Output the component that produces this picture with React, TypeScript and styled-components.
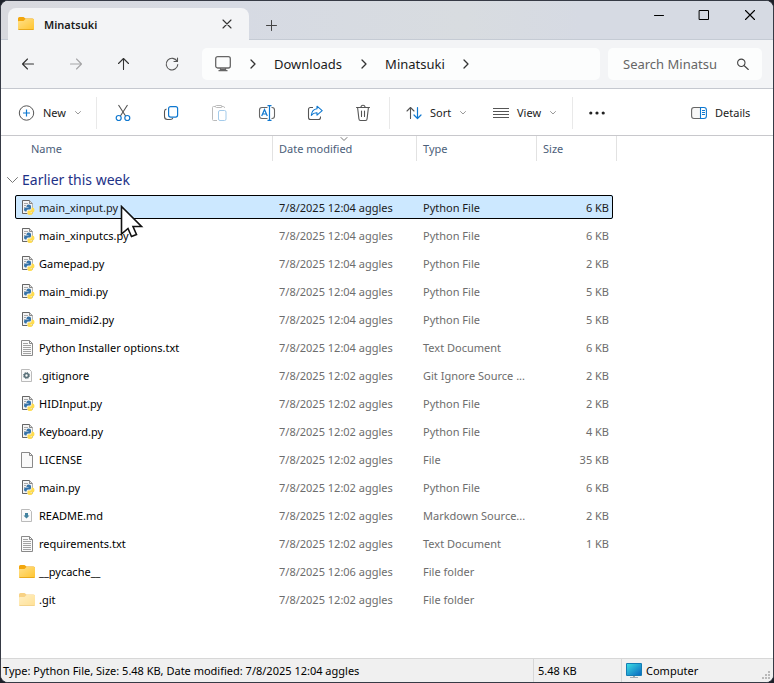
import React from "react";
import styled, { createGlobalStyle, css } from "styled-components";

const Global = createGlobalStyle`
  * { box-sizing: border-box; }
  html, body { margin: 0; background: #1d2029; }
  body, button, input { font-family: "Noto Sans", "Open Sans", sans-serif; font-size: 11px; }
  button { border: 0; padding: 0; background: none; color: inherit; cursor: default; }
  svg { display: block; flex: none; }
`;

const Window = styled.div`
  position: relative;
  display: flex;
  flex-direction: column;
  min-height: 100vh;
  border: 1px solid #363a45;
  border-radius: 8px;
  background: #fff;
  color: #000;
  overflow: hidden;
`;

const TitleBar = styled.header`
  display: flex;
  height: 39px;
  padding-left: 7px;
  background: linear-gradient(90deg, #d8d9de, #d6dae3 30%, #d8dce0 60%, #d6dae3 75%);
  box-shadow: inset 0 -1px #c5cbd4;
`;

const Tab = styled.div`
  display: flex;
  align-items: center;
  width: 241px;
  margin-top: 7px;
  padding: 0 16px 0 10px;
  border-radius: 8px 8px 0 0;
  background: #f3f4f6;
`;

const TabTitle = styled.span`
  flex: 1;
  margin-left: 10px;
  font-size: 11px;
  font-weight: 600;
  color: #1b1b1b;
`;

const PlainButton = styled.button`
  display: flex;
  align-items: center;
  justify-content: center;
`;

const NewTab = styled(PlainButton)`
  width: 44px;
  padding-top: 8px;
`;

const Captions = styled.div`
  display: flex;
  height: 28px;
  margin-left: auto;
`;

const Caption = styled(PlainButton)`
  width: 46px;
`;

const NavBar = styled.nav`
  display: flex;
  align-items: center;
  height: 49px;
  padding: 0 11px 0 3px;
  border-bottom: 1px solid #c5c8cf;
  background: #f3f4f6;
`;

const NavButton = styled(PlainButton)`
  width: 48px;
  height: 32px;
`;

const AddressBar = styled.div`
  display: flex;
  align-items: center;
  flex: 1;
  height: 32px;
  margin: 0 8px 0 6px;
  padding-left: 13px;
  border-radius: 5px;
  background: #fcfdfd;
`;

const Crumb = styled.a`
  color: #1b1b1b;
  font-size: 13px;
  text-decoration: none;
`;

const CrumbArrow = styled.span`
  display: flex;
  justify-content: center;
  width: 43px;
`;

const SearchBox = styled.label`
  display: flex;
  align-items: center;
  width: 154px;
  height: 32px;
  padding: 0 13px 0 15px;
  border-radius: 5px;
  background: #fcfdfd;
`;

const SearchInput = styled.input`
  flex: 1;
  min-width: 0;
  padding: 0;
  border: 0;
  outline: 0;
  background: none;
  font-size: 13px;
  &::placeholder { color: #666; opacity: 1; }
`;

const Toolbar = styled.div`
  display: flex;
  align-items: center;
  height: 47px;
  padding: 1px 22px 0 17px;
  border-bottom: 1px solid #c8c8cc;
  color: #1b1b1b;
`;

const Tool = styled(PlainButton)`
  width: 48px;
  height: 32px;
`;

const ToolGroup = styled.div`
  display: flex;
  padding: 0 2px;
`;

const LabelTool = styled(PlainButton)<{ $width: number }>`
  justify-content: flex-start;
  gap: 8px;
  width: ${(p) => p.$width}px;
  height: 32px;
  white-space: nowrap;
`;

const SortTool = styled(LabelTool)`
  margin-left: 16px;
`;

const ToolLabel = styled.span`
  font-size: 11px;
`;

const Divider = styled.span`
  width: 1px;
  height: 32px;
  background: #e9e9e9;
`;

const Spacer = styled.span`
  flex: 1;
`;

const Content = styled.main`
  flex: 1;
  padding-bottom: 40px;
`;

const Files = styled.table`
  width: 598px;
  margin: -4px 0 0 14px;
  table-layout: fixed;
  border-collapse: separate;
  border-spacing: 0 4px;
`;

const Heading = styled.th<{ $width: number; $inset: number }>`
  position: relative;
  width: ${(p) => p.$width}px;
  height: 25px;
  padding: 0 0 0 ${(p) => p.$inset}px;
  text-align: left;
  font-weight: 400;
  color: #4c607a;
  & + & { border-left: 1px solid #e2e2e2; }
  &:last-child::after {
    content: "";
    position: absolute;
    top: 0;
    right: -4px;
    width: 1px;
    height: 25px;
    background: #e2e2e2;
  }
`;

const SortMark = styled.span`
  position: absolute;
  top: 1px;
  left: 67px;
`;

const GroupCell = styled.th`
  height: 26px;
  padding: 4px 0 0;
  font-weight: 400;
`;

const GroupButton = styled.button`
  display: flex;
  align-items: center;
  gap: 4px;
  margin-left: -9px;
  color: #1e3287;
  font-size: 14px;
  line-height: 22px;
`;

const Cell = styled.td`
  height: 24px;
  padding: 2px 0 0 7px;
  line-height: 16px;
  color: #6d6d6d;
  white-space: nowrap;
`;

const SizeCell = styled(Cell)`
  padding-right: 4px;
  text-align: right;
`;

const NameCell = styled(Cell)`
  padding-left: 4px;
  color: #000;
`;

const FileName = styled.span`
  display: flex;
  align-items: center;
  gap: 4px;
`;

const Row = styled.tr<{ $selected: boolean }>`
  ${(p) =>
    p.$selected &&
    css`
      background: #cce8ff;
      outline: 1px solid #000;
      outline-offset: -1px;
      border-radius: 2px;
      ${Cell} { color: #1b1b1b; }
    `}
`;

const StatusBar = styled.footer`
  display: flex;
  height: 24px;
  border-top: 1px solid #d7d7d7;
  background: #f0f0f0;
  line-height: 24px;
`;

const StatusPart = styled.div<{ $width?: number }>`
  display: flex;
  align-items: center;
  gap: 4px;
  ${(p) => (p.$width ? `width: ${p.$width}px;` : "flex: 1;")}
  padding-left: 2px;
  white-space: nowrap;
  & + & { padding-left: 4px; border-left: 1px solid #d7d7d7; }
`;

const Grip = styled.span`
  align-self: flex-end;
  margin-left: auto;
`;

const Pointer = styled.svg`
  position: absolute;
  top: 204px;
  left: 119px;
`;

function Stroke({ d, size = 16, color = "#333", width = 1 }: { d: string; size?: number; color?: string; width?: number }) {
  return (
    <svg width={size} height={size} viewBox={`0 0 ${size} ${size}`} fill="none" stroke={color} strokeWidth={width} strokeLinecap="round" strokeLinejoin="round" aria-hidden="true">
      <path d={d} />
    </svg>
  );
}

const Chevron = () => <Stroke size={8} color="#999" d="M1.5 2.5 4 5 6.5 2.5" />;

function Folder({ pale = false }: { pale?: boolean }) {
  return (
    <svg width="16" height="16" viewBox="0 0 16 16" opacity={pale ? 0.5 : 1} aria-hidden="true">
      <defs>
        <linearGradient id="folder" x2="1" y2="1">
          <stop stopColor="#ffe08a" />
          <stop offset="1" stopColor="#ffc42e" />
        </linearGradient>
      </defs>
      <path d="M0 2.5Q0 1 1.5 1H5.5L7.5 2.5H14.5Q16 2.5 16 4V6H0Z" fill="#f2a60d" />
      <path d="M0 5.5Q0 5 .7 5H5.5L7.5 3H15.2Q16 3 16 4V13Q16 14 15 14H1Q0 14 0 13Z" fill="url(#folder)" />
      <path d="M.5 13.5H15.5" stroke="#e9a91c" />
    </svg>
  );
}

function PageIcon({ kind }: { kind: string }) {
  if (kind === "folder" || kind === "hidden") return <Folder pale={kind === "hidden"} />;
  if (kind === "python")
    return (
      <svg width="16" height="16" viewBox="0 0 16 16" aria-hidden="true">
        <path d="M3.5 .5H10.5L13.5 3.5V13.5H3.5Z" fill="#f4f4f4" stroke="#b5b5b5" />
        <path d="M8 13.5H3.5V.5H10.5L13 3" fill="none" stroke="#666" />
        <path d="M10.5 .5V3.5H13.5" fill="#ddd" stroke="#888" />
        <path d="M5 3.5H9M5 5.5H7M5 7.5H6" stroke="#aaa" />
        <path d="M7.5 6Q7.5 4.5 9.5 4.5Q12 4.5 12 6V8Q12 9.5 10.5 9.5H9Q7.5 9.5 7.5 11.5H6.5Q5 11.5 5 9.5Q5 7.5 6.5 7.5H9.5V7H7.5Z" fill="#3673a8" />
        <path d="M12.5 7.5H13.5Q15.5 7.5 15.5 10Q15.5 12.5 13.5 12.5H11.5V13H13.5V13.5Q13.5 15 11 15Q8.5 15 8.5 13.5V11.5Q8.5 10.5 9.5 10.5H11Q12.5 10.5 12.5 9Z" fill="#ffdc4f" />
      </svg>
    );
  const small = kind === "git" || kind === "markdown";
  return (
    <svg width="16" height="16" viewBox="0 0 16 16" aria-hidden="true">
      {small ? (
        <path d="M2.5 1.5H10.5L12.5 3.5V13.5H2.5Z" fill="#fafafa" stroke="#bbb" />
      ) : (
        <path d="M2.5 .5H10.5L13.5 3.5V15.5H2.5Z" fill="#fafafa" stroke="#8a8a8a" />
      )}
      {!small && <path d="M10.5 .5V3.5H13.5" fill="none" stroke="#8a8a8a" />}
      {kind === "text" && <path d="M4 3.5H9M4 5.5H12M4 7.5H12M4 9.5H12M4 11.5H12M4 13.5H12" stroke="#a2a2a2" />}
      {kind === "git" && (
        <g fill="none" stroke="#597078">
          <circle cx="7.5" cy="7.5" r="2" strokeWidth="1.6" />
          <circle cx="7.5" cy="7.5" r="3.1" strokeWidth="1" strokeDasharray="1.2 1.23" />
        </g>
      )}
      {kind === "markdown" && <path d="M6 5H9V7.5H10.5L7.5 10.5 4.5 7.5H6Z" fill="#43829f" />}
    </svg>
  );
}

const MonitorIcon = () => (
  <svg width="16" height="16" viewBox="0 0 16 16" fill="none" stroke="#666" strokeWidth="1.3" aria-hidden="true">
    <rect x=".7" y=".7" width="14.6" height="11.3" rx="2" />
    <path d="M5.5 12V14.5M10.5 12V14.5M3.5 14.7H12.5M6 13.3H10" />
  </svg>
);

const BLUE = "#0f78d0";

const NewIcon = () => (
  <svg width="17" height="16" viewBox="0 0 17 16" fill="none" aria-hidden="true">
    <circle cx="8.5" cy="8" r="7.2" stroke="#555" />
    <path d="M5 8H12M8.5 4.5V11.5" stroke={BLUE} strokeWidth="1.2" />
  </svg>
);
const CutIcon = () => (
  <svg width="16" height="18" viewBox="0 0 16 18" fill="none" aria-hidden="true">
    <path d="M3.5 1 10.6 12M12.5 1 5.4 12" stroke="#555" strokeWidth="1.1" />
    <circle cx="3.7" cy="14" r="2.5" stroke={BLUE} strokeWidth="1.2" />
    <circle cx="12.3" cy="14" r="2.5" stroke={BLUE} strokeWidth="1.2" />
  </svg>
);
const CopyIcon = () => (
  <svg width="16" height="16" viewBox="0 0 16 16" fill="none" aria-hidden="true">
    <path d="M3.5 4Q1.5 4.5 1.5 6.5V11.5Q1.5 14.5 4.5 14.5H7Q9.5 14.5 9.8 12.8" stroke="#555" strokeWidth="1.1" />
    <rect x="5.6" y="1.6" width="9" height="10.5" rx="2" stroke={BLUE} strokeWidth="1.2" />
  </svg>
);
const PasteIcon = () => (
  <svg width="16" height="18" viewBox="0 0 16 18" fill="none" aria-hidden="true">
    <path d="M4.5 2.5H2.5Q1.5 2.5 1.5 3.5V15.5Q1.5 16.5 2.5 16.5H6M10.5 2.5H12.5Q13.5 2.5 13.5 4" stroke="#bbb" />
    <rect x="4.5" y="1.5" width="6.5" height="2" rx="1" stroke="#bbb" />
    <rect x="7.5" y="6.5" width="7.5" height="10" rx="1.5" stroke="#a4cbea" />
  </svg>
);
const RenameIcon = () => (
  <svg width="18" height="16" viewBox="0 0 18 16" fill="none" aria-hidden="true">
    <path d="M9.5 2.5H4Q1.5 2.5 1.5 5V11Q1.5 13.5 4 13.5H9.5M13.5 2.5H14Q16.5 2.5 16.5 5V11Q16.5 13.5 14 13.5H13.5" stroke="#666" strokeWidth="1.1" />
    <path d="M3.7 11 6.5 4.6 9.3 11M4.7 9H8.3M9.5 .6H13.5M11.5 .6V15.4M9.5 15.4H13.5" stroke={BLUE} strokeWidth="1.2" />
  </svg>
);
const ShareIcon = () => (
  <svg width="16" height="16" viewBox="0 0 16 16" fill="none" strokeLinejoin="round" aria-hidden="true">
    <path d="M6 2.5H3.5Q1.5 2.5 1.5 4.5V12.5Q1.5 14.5 3.5 14.5H11.5Q13.5 14.5 13.5 12.5V11.5" stroke="#555" strokeWidth="1.1" />
    <path d="M10 1.2 15.2 5.7 10 10.2V7.7Q6.5 7.5 4.3 10.4Q5 4.3 10 3.8Z" stroke={BLUE} strokeWidth="1.1" />
  </svg>
);
const DeleteIcon = () => (
  <svg width="16" height="18" viewBox="0 0 16 18" fill="none" stroke="#555" strokeWidth="1.1" strokeLinecap="round" aria-hidden="true">
    <path d="M1.5 3.5H14.5M6 3.3Q6 1.3 8 1.3T10 3.3M2.6 3.7 3.9 14.8Q4 16.5 5.5 16.5H10.5Q12 16.5 12.1 14.8L13.4 3.7M6.5 7V12.5M9.5 7V12.5" />
  </svg>
);
const SortIcon = () => (
  <svg width="16" height="14" viewBox="0 0 16 14" fill="none" strokeLinecap="round" strokeLinejoin="round" aria-hidden="true">
    <path d="M4.5 12.5V1.5M1 5 4.5 1.5 8 5" stroke="#555" strokeWidth="1.1" />
    <path d="M11.5 1.5V12.5M8 9 11.5 12.5 15 9" stroke={BLUE} strokeWidth="1.2" />
  </svg>
);
const DetailsIcon = () => (
  <svg width="16" height="14" viewBox="0 0 16 14" fill="none" aria-hidden="true">
    <path d="M9.5 1.5H3Q.6 1.5 .6 4V10Q.6 12.5 3 12.5H9.5" fill="#f7f7f7" stroke="#666" strokeWidth="1.1" />
    <path d="M9.5 1.5H13Q15.4 1.5 15.4 4V10Q15.4 12.5 13 12.5H9.5Z" stroke={BLUE} strokeWidth="1.1" />
    <path d="M11 4.5H14M11 6.5H14M11 8.5H14" stroke={BLUE} />
  </svg>
);
const ComputerIcon = () => (
  <svg width="16" height="16" viewBox="0 0 16 16" aria-hidden="true">
    <defs>
      <linearGradient id="screen" x2="1" y2="1">
        <stop stopColor="#3bdce3" />
        <stop offset="1" stopColor="#0a68c0" />
      </linearGradient>
    </defs>
    <path d="M7 12H9V15H7Z" fill="#9ca5ac" />
    <path d="M4 14.5H12" stroke="#a5adb4" />
    <rect width="16" height="13" rx="1" fill="#137db5" />
    <rect x="1" y="1" width="14" height="11" fill="url(#screen)" />
  </svg>
);

type FileRow = [name: string, kind: string, time: string, type: string, size: string];

const files: FileRow[] = [
  ["main_xinput.py", "python", "12:04", "Python File", "6 KB"],
  ["main_xinputcs.py", "python", "12:04", "Python File", "6 KB"],
  ["Gamepad.py", "python", "12:04", "Python File", "2 KB"],
  ["main_midi.py", "python", "12:04", "Python File", "5 KB"],
  ["main_midi2.py", "python", "12:04", "Python File", "5 KB"],
  ["Python Installer options.txt", "text", "12:04", "Text Document", "6 KB"],
  [".gitignore", "git", "12:02", "Git Ignore Source ...", "2 KB"],
  ["HIDInput.py", "python", "12:02", "Python File", "2 KB"],
  ["Keyboard.py", "python", "12:02", "Python File", "4 KB"],
  ["LICENSE", "file", "12:02", "File", "35 KB"],
  ["main.py", "python", "12:02", "Python File", "6 KB"],
  ["README.md", "markdown", "12:02", "Markdown Source...", "2 KB"],
  ["requirements.txt", "text", "12:02", "Text Document", "1 KB"],
  ["__pycache__", "folder", "12:06", "File folder", ""],
  [".git", "hidden", "12:02", "File folder", ""],
];

const Arrow = () => (
  <CrumbArrow>
    <Stroke size={10} width={1.3} d="M3 1 7 5 3 9" />
  </CrumbArrow>
);

export default function App() {
  return (
    <>
      <Global />
      <Window>
        <TitleBar>
          <Tab>
            <Folder />
            <TabTitle>Minatsuki</TabTitle>
            <PlainButton aria-label="Close tab">
              <Stroke size={12} width={1.1} d="M2 2 10 10M10 2 2 10" />
            </PlainButton>
          </Tab>
          <NewTab aria-label="New tab">
            <Stroke size={12} color="#444" d="M1.5 6.5H11.5M6.5 1.5V11.5" />
          </NewTab>
          <Captions>
            <Caption aria-label="Minimize"><Stroke size={12} color="#000" d="M2.5 6.5H11.5" /></Caption>
            <Caption aria-label="Maximize"><Stroke size={12} color="#000" d="M1.5 1.5H10.5V10.5H1.5Z" /></Caption>
            <Caption aria-label="Close"><Stroke size={12} color="#000" width={1.1} d="M1.5 1.5 10.5 10.5M10.5 1.5 1.5 10.5" /></Caption>
          </Captions>
        </TitleBar>
        <NavBar>
          <NavButton aria-label="Back"><Stroke width={1.1} d="M13.5 8H2.5M7.5 3 2.5 8 7.5 13" /></NavButton>
          <NavButton aria-label="Forward" disabled><Stroke width={1.1} color="#a5a5a7" d="M2.5 8H13.5M8.5 3 13.5 8 8.5 13" /></NavButton>
          <NavButton aria-label="Up"><Stroke width={1.1} d="M7.5 13.5V2.5M2.5 7.5 7.5 2.5 12.5 7.5" /></NavButton>
          <NavButton aria-label="Refresh"><Stroke width={1.1} color="#555" d="M13.2 5.5A5.8 5.8 0 1 0 13.8 8.5M13.5 2V5.5H10" /></NavButton>
          <AddressBar>
            <MonitorIcon />
            <Arrow />
            <Crumb href="#downloads">Downloads</Crumb>
            <Arrow />
            <Crumb href="#minatsuki">Minatsuki</Crumb>
            <Arrow />
          </AddressBar>
          <SearchBox>
            <SearchInput type="search" aria-label="Search" placeholder="Search Minatsu" />
            <Stroke size={12} width={1.1} color="#444" d="M8 4.8A3.7 3.7 0 1 1 .6 4.8A3.7 3.7 0 1 1 8 4.8M7 7.5 11.3 11.5" />
          </SearchBox>
        </NavBar>
        <Toolbar>
          <LabelTool $width={78}><NewIcon /><ToolLabel>New</ToolLabel><Chevron /></LabelTool>
          <Divider />
          <ToolGroup>
            <Tool aria-label="Cut"><CutIcon /></Tool>
            <Tool aria-label="Copy"><CopyIcon /></Tool>
            <Tool aria-label="Paste" disabled><PasteIcon /></Tool>
            <Tool aria-label="Rename"><RenameIcon /></Tool>
            <Tool aria-label="Share"><ShareIcon /></Tool>
            <Tool aria-label="Delete"><DeleteIcon /></Tool>
          </ToolGroup>
          <Divider />
          <SortTool $width={87}><SortIcon /><ToolLabel>Sort</ToolLabel><Chevron /></SortTool>
          <LabelTool $width={79}>
            <svg width="16" height="12" viewBox="0 0 16 12" stroke="#555" aria-hidden="true">
              <path d="M0 1.5H16M0 4.5H16M0 7.5H16M0 10.5H16" />
            </svg>
            <ToolLabel>View</ToolLabel><Chevron />
          </LabelTool>
          <Divider />
          <Tool aria-label="More options">
            <svg width="16" height="4" viewBox="0 0 16 4" fill="#222" aria-hidden="true">
              <circle cx="1.8" cy="2" r="1.6" /><circle cx="8" cy="2" r="1.6" /><circle cx="14.2" cy="2" r="1.6" />
            </svg>
          </Tool>
          <Spacer />
          <LabelTool $width={60}><DetailsIcon /><ToolLabel>Details</ToolLabel></LabelTool>
        </Toolbar>
        <Content>
          <Files>
            <thead>
              <tr>
                <Heading $width={257} $inset={16}><button>Name</button></Heading>
                <Heading $width={144} $inset={6}>
                  <button>Date modified</button>
                  <SortMark><Stroke size={8} color="#777" d="M1 .5 4 3.5 7 .5" /></SortMark>
                </Heading>
                <Heading $width={120} $inset={6}><button>Type</button></Heading>
                <Heading $width={77} $inset={6}><button>Size</button></Heading>
              </tr>
            </thead>
            <tbody>
              <tr>
                <GroupCell colSpan={4} scope="rowgroup">
                  <GroupButton aria-expanded="true">
                    <Stroke size={12} color="#777" d="M1.5 3.5 6.5 8.5 11.5 3.5" />
                    Earlier this week
                  </GroupButton>
                </GroupCell>
              </tr>
              {files.map(([name, kind, time, type, size], i) => (
                <Row key={name} $selected={i === 0} aria-selected={i === 0}>
                  <NameCell><FileName><PageIcon kind={kind} />{name}</FileName></NameCell>
                  <Cell>7/8/2025 {time} aggles</Cell>
                  <Cell>{type}</Cell>
                  <SizeCell>{size}</SizeCell>
                </Row>
              ))}
            </tbody>
          </Files>
        </Content>
        <StatusBar>
          <StatusPart>Type: Python File, Size: 5.48 KB, Date modified: 7/8/2025 12:04 aggles</StatusPart>
          <StatusPart $width={88}>5.48 KB</StatusPart>
          <StatusPart $width={152}>
            <ComputerIcon />Computer
            <Grip>
              <svg width="12" height="12" viewBox="0 0 12 12" fill="#b9b9b9" aria-hidden="true">
                <path d="M7 1h2v2H7zM4 4h2v2H4zM7 4h2v2H7zM1 7h2v2H1zM4 7h2v2H4zM7 7h2v2H7z" />
              </svg>
            </Grip>
          </StatusPart>
        </StatusBar>
        <Pointer width="24" height="36" viewBox="0 0 24 36" aria-hidden="true">
          <path d="M1.5 1.5V29L8 23.5 11.5 31.5 16.5 29.5 13 21.5H21.5Z" fill="#fff" stroke="#111" strokeWidth="1.6" />
        </Pointer>
      </Window>
    </>
  );
}
